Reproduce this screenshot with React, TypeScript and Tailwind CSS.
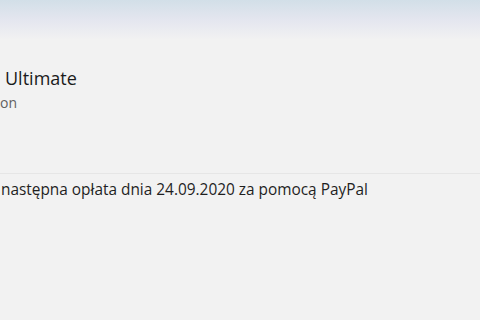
import React from 'react';

const App = () => {
    return (
        <div className="w-[480px] h-[320px] overflow-hidden bg-[#f2f2f2] flex flex-col" style={{ fontFamily: '"Open Sans", "Noto Sans", sans-serif' }}>
            <div className="h-[40px] shrink-0 bg-gradient-to-b from-[#d2dfe8] via-[#e4e6ef] to-[#f2f2f2]" />
            <div className="pl-[5px] mt-[26px] text-[18px] leading-[24px] text-[#1b1b1b]">Ultimate</div>
            <div className="mt-[3px] text-[14px] leading-[20px] text-[#616161]">on</div>
            <div className="mt-[60px] h-px bg-[#e6e6e6]" />
            <div className="mt-[6px] pl-[1px] text-[15.4px] leading-[20px] text-[#1f1f1f]">
                następna opłata dnia 24.09.2020 za pomocą PayPal
            </div>
        </div>
    );
};

export default App;
